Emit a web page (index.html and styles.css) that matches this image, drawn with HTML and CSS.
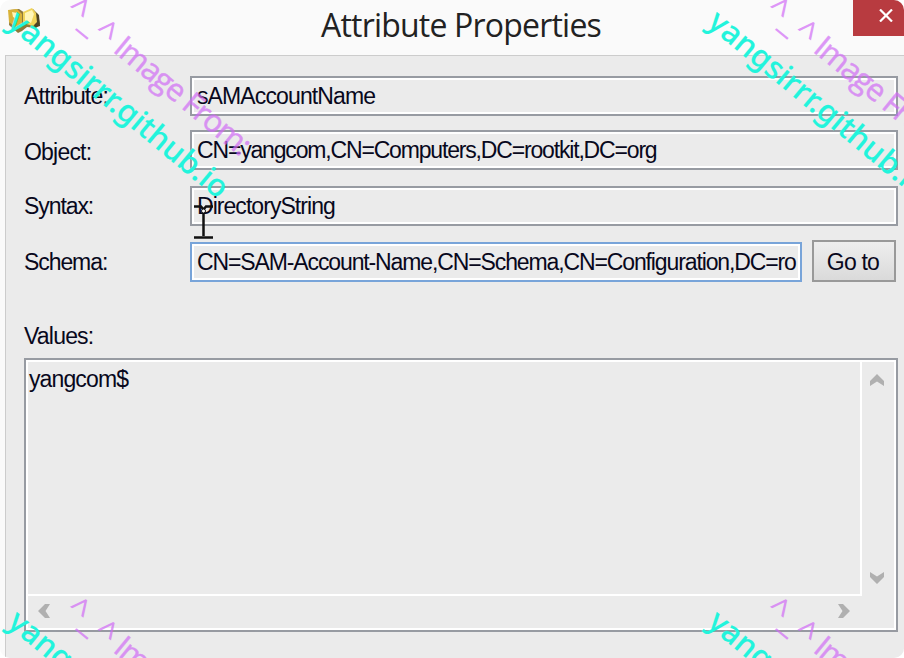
FILE: index.html
```html
<!DOCTYPE html>
<html lang="en">
<head>
<meta charset="utf-8">
<title>Attribute Properties</title>
<link rel="stylesheet" href="styles.css">
</head>
<body>
<main class="window">
  <header class="titlebar">
    <svg class="app-icon" viewBox="0 0 34 26" width="34" height="26">
      <path d="M2 2l9-1 6 4 8-4 5 5 2 10-4 4-9-1-5 4-4 2-9-8z" fill="#8f7a3c"/>
      <path d="M27 4l4 3 1 11-6 2z" fill="#4d4326"/>
      <path d="M0 2l9-1 5 5v13l-5 2-8-7z" fill="#d9b238"/>
      <path d="M15 4l9-4 4 5 1 9-4 4-10-3z" fill="#f0d45a"/>
      <path d="M17 5l7-3 2 4-3 9-6-3zM4 4l5 1v6l-4-2z" fill="#fff6b8"/>
    </svg>
    <h1 class="title">Attribute Properties</h1>
    <button class="close" aria-label="Close"><svg width="14" height="13" viewBox="0 0 14 13"><path d="M1 .5l12 12M13 .5l-12 12" stroke="#fff" stroke-width="2.200"/></svg></button>
  </header>
  <section class="content">
    <div class="row"><label class="attr">Attribute:</label><div class="field"><span class="v1">sAMAccountName</span></div></div>
    <div class="row object"><label class="obj">Object:</label><div class="field"><span class="v2">CN=yangcom,CN=Computers,DC=rootkit,DC=org</span></div></div>
    <div class="row syntax"><label class="syn">Syntax:</label><div class="field"><span class="v3">DirectoryString</span></div></div>
    <div class="row schema"><label class="sch">Schema:</label><div class="field focused"><span class="v4">CN=SAM-Account-Name,CN=Schema,CN=Configuration,DC=ro</span></div><button class="goto">Go to</button></div>
    <label class="values">Values:</label>
    <div class="list">
      <div class="list-body"><span class="v5">yangcom$</span></div>
      <div class="vscroll">
        <svg width="14" height="12" viewBox="0 0 14 12"><path d="M7 0l7 7v5L7 7.500 0 12V7z"/></svg>
        <svg width="14" height="12" viewBox="0 0 14 12"><path d="M7 12L0 5V0l7 4.500 7-4.500v5z"/></svg>
      </div>
      <div class="hscroll">
        <svg width="12" height="14" viewBox="0 0 12 14"><path d="M0 7l7-7h5L7.500 7l4.500 7H7z"/></svg>
        <svg width="12" height="14" viewBox="0 0 12 14"><path d="M12 7L5 0H0l4.500 7-4.500 7h5z"/></svg>
      </div>
    </div>
  </section>
  <svg class="cursor" width="19" height="34" viewBox="0 0 19 34"><path d="M0 1.500h7l2.500 3 2.500-3h7M9.500 8v23M0 32.500h19" fill="none" stroke="#111" stroke-width="2.500"/><circle cx="9.500" cy="6" r="2" fill="#fff" stroke="#111"/></svg>
  <svg class="watermark" width="904" height="658" viewBox="0 0 904 658">
    <defs>
      <g id="mark">
        <text class="cyan" transform="translate(6 25) rotate(39.5)" textLength="275">yangsirrr.github.io</text>
        <text class="violet face" transform="translate(63 13) rotate(39.5)" textLength="55.700">^_^</text>
        <text class="violet" transform="translate(112 51) rotate(39.5)" textLength="167">Image From:</text>
      </g>
    </defs>
    <use href="#mark"/><use href="#mark" x="700"/><use href="#mark" y="600"/><use href="#mark" x="700" y="600"/>
  </svg>
</main>
</body>
</html>
```
FILE: styles.css
```css
* { box-sizing: border-box; }
body { margin: 0; background: #fff; }
.window {
  position: relative; width: 904px; height: 658px; overflow: hidden;
  background: #fafafa; border-radius: 10px;
  font: 23px/28px "Liberation Sans", sans-serif; color: #08081c;
}
.titlebar { display: flex; height: 55px; padding-left: 8px; align-items: flex-start; }
.app-icon { margin-top: 8px; flex: none; }
.title { margin: 6px 0 0 279px; font: 400 32px/38px "Open Sans", sans-serif; letter-spacing: -0.8px; color: #222; white-space: nowrap; }
.close { display: flex; width: 51px; height: 36px; margin-left: auto; padding: 9px 0 0 26px; border: 0; background: #b83b40; align-items: flex-start; }
.close svg { flex: none; }
.content { height: 603px; margin-left: 5px; padding: 20px 6px 0 18px; background: #ebebeb; border-top: 1px solid #ccc; border-left: 1px solid #ccc; }
.row { display: flex; height: 40px; align-items: center; }
.row label { width: 166px; flex: none; white-space: nowrap; }
.object { margin-top: 14px; }
.object label { padding-top: 4px; }
.syntax { margin-top: 16px; }
.schema { margin-top: 16px; }
.field { display: flex; flex: 1; min-width: 0; height: 40px; padding-left: 3px; align-items: center; border: 2px solid #979ba2; box-shadow: inset 0 0 0 2px #fff; white-space: nowrap; overflow: hidden; }
.field span { padding-left: 2px; }
.focused { border-color: #78a4d9; flex: 0 0 612px; }
.goto { width: 84px; height: 42px; margin: -2px 0 0 10px; padding: 2px 2px 0 0; border: 2px solid #999; background: linear-gradient(#eee, #dadada); font: 23px/28px "Liberation Sans", sans-serif; color: #08081c; letter-spacing: -.8px; }
.values { display: block; margin-top: 40px; height: 36px; letter-spacing: -.8px; }
.list { display: grid; grid-template: 234px 32px / 834px 1fr; width: 874px; height: 274px; border: 2px solid #979ba2; box-shadow: inset 0 0 0 2px #fff; padding: 2px; }
.list-body { padding-left: 1px; padding-top: 3px; border-right: 2px solid #fff; border-bottom: 2px solid #fff; }
.list svg { fill: #b0b0b0; }
.vscroll { display: flex; flex-direction: column; justify-content: space-between; padding: 12px 0 12px 8px; }
.hscroll { display: flex; justify-content: space-between; align-items: center; padding: 0 12px 2px 10px; }
.attr, .obj { letter-spacing: -.8px; }
.syn, .sch { letter-spacing: -1.08px; }
.v1, .v5 { letter-spacing: -.88px; }
.v2 { letter-spacing: -1.17px; }
.v3 { letter-spacing: -.95px; }
.v4 { letter-spacing: -1.12px; }
.cursor { position: absolute; left: 194px; top: 205px; }
.watermark { position: absolute; left: 0; top: 0; pointer-events: none; }
.cyan { font: 500 31px "Noto Sans", sans-serif; fill: #22f4dc; stroke: #22f4dc; stroke-width: .2px; }
.violet { font: 400 31px "Open Sans", sans-serif; fill: #d06cf5; stroke: #d06cf5; stroke-width: .5px; opacity: .7; }
.face { font-family: "Noto Sans", sans-serif; font-size: 35px; stroke: none; }
```
